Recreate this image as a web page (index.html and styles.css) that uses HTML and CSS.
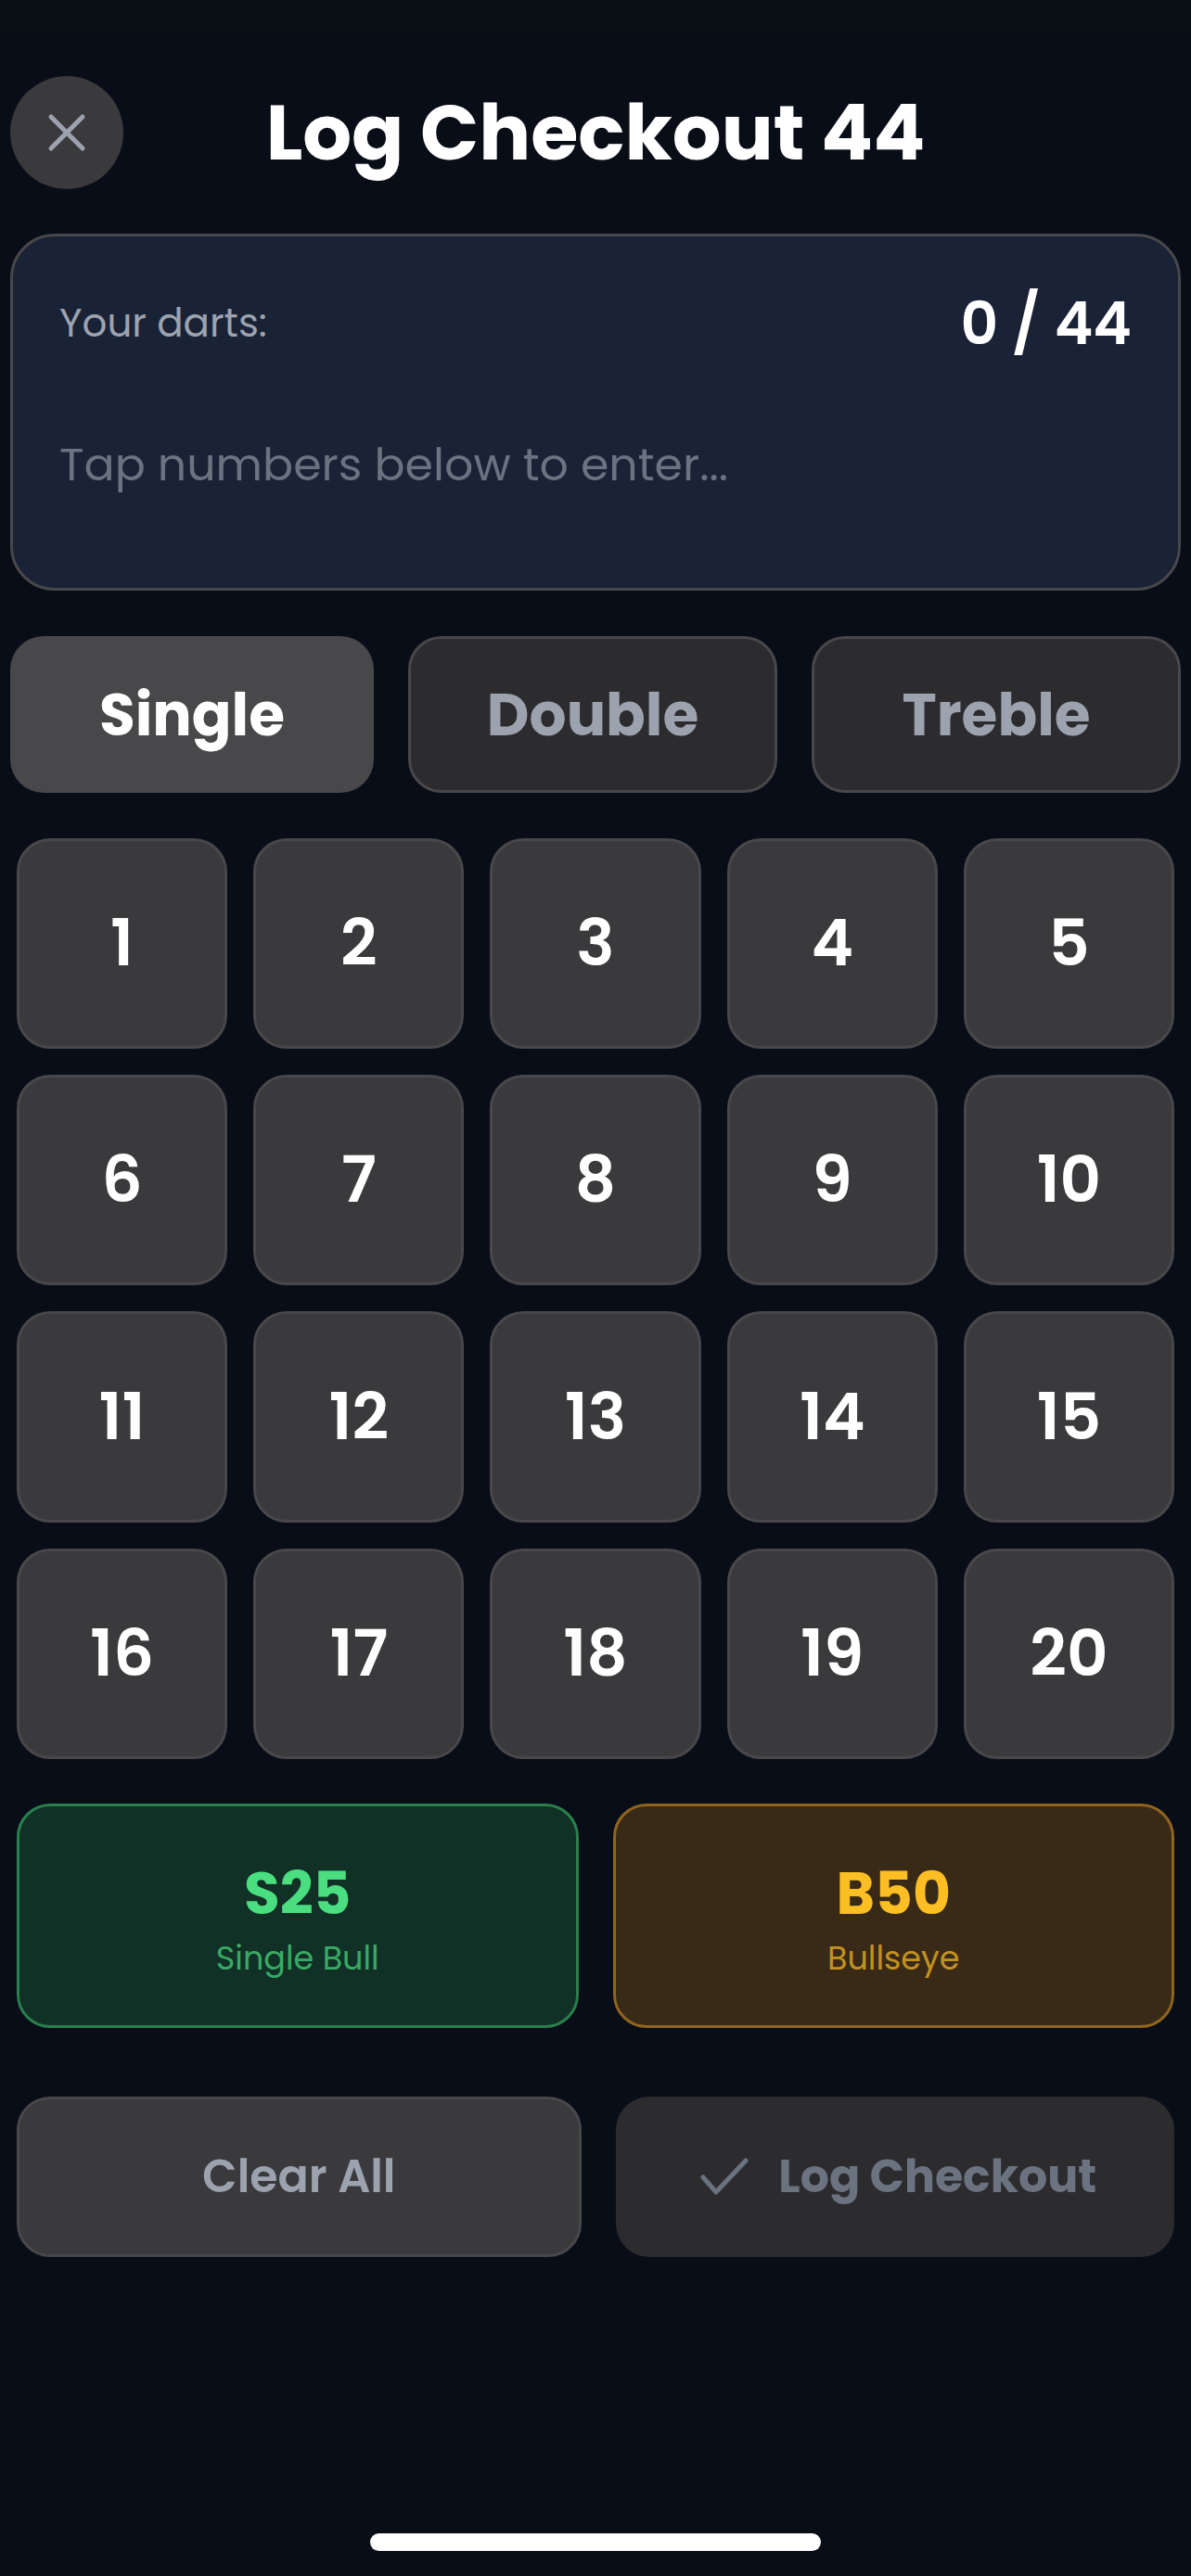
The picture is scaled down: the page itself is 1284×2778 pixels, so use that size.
FILE: index.html
```html
<!DOCTYPE html>
<html lang="en">
<head>
<meta charset="utf-8">
<meta name="viewport" content="width=device-width, initial-scale=1">
<title>Log Checkout 44</title>
<link rel="stylesheet" href="styles.css">
</head>
<body>
<div class="status-strip"></div>
<main class="screen">
  <header class="header">
    <button class="close" type="button" aria-label="Close">
      <svg class="close-icon" viewBox="0 0 42 42" aria-hidden="true"><path d="M4 4L38 38M38 4L4 38"/></svg>
    </button>
    <h1 class="title">Log Checkout 44</h1>
  </header>

  <section class="entry">
    <div class="entry-top">
      <span class="entry-label">Your darts:</span>
      <span class="entry-score">0 / 44</span>
    </div>
    <p class="entry-hint">Tap numbers below to enter...</p>
  </section>

  <div class="modes">
    <button class="mode mode-active" type="button">Single</button>
    <button class="mode" type="button">Double</button>
    <button class="mode" type="button">Treble</button>
  </div>

  <div class="pad">
    <div class="keys">
      <button class="key" type="button">1</button>
      <button class="key" type="button">2</button>
      <button class="key" type="button">3</button>
      <button class="key" type="button">4</button>
      <button class="key" type="button">5</button>
      <button class="key" type="button">6</button>
      <button class="key" type="button">7</button>
      <button class="key" type="button">8</button>
      <button class="key" type="button">9</button>
      <button class="key" type="button">10</button>
      <button class="key" type="button">11</button>
      <button class="key" type="button">12</button>
      <button class="key" type="button">13</button>
      <button class="key" type="button">14</button>
      <button class="key" type="button">15</button>
      <button class="key" type="button">16</button>
      <button class="key" type="button">17</button>
      <button class="key" type="button">18</button>
      <button class="key" type="button">19</button>
      <button class="key" type="button">20</button>
    </div>

    <div class="bulls">
      <button class="bull bull-single" type="button">
        <span class="bull-code">S25</span>
        <span class="bull-name">Single Bull</span>
      </button>
      <button class="bull bull-eye" type="button">
        <span class="bull-code">B50</span>
        <span class="bull-name">Bullseye</span>
      </button>
    </div>

    <div class="actions">
      <button class="action action-clear" type="button">Clear All</button>
      <button class="action action-log" type="button" disabled>
        <svg class="check-icon" viewBox="0 0 60 42" aria-hidden="true"><path d="M11 22L25 38L57 4"/></svg>
        Log Checkout
      </button>
    </div>
  </div>
</main>
<div class="home-indicator"></div>
</body>
</html>
```
FILE: styles.css
```css
*,
*::before,
*::after {
  box-sizing: border-box;
}

body {
  margin: 0;
  min-height: 100vh;
  display: flex;
  flex-direction: column;
  background: #080d18;
  color: #fff;
  font-family: Poppins, Inter, "Liberation Sans", sans-serif;
}

button {
  margin: 0;
  padding: 0;
  border: 0;
  font: inherit;
  color: inherit;
}

.status-strip {
  height: 33px;
  background: #0b1015;
}

.screen {
  flex: 1;
  padding: 48px 11px 0;
}

.header {
  display: grid;
  grid-template-columns: 122px 1fr 122px;
  align-items: center;
}

.close {
  display: flex;
  align-items: center;
  justify-content: center;
  width: 122px;
  height: 122px;
  border-radius: 50%;
  background: #3a3a3c;
}

.close-icon {
  width: 42px;
  height: 42px;
  fill: none;
  stroke: #9ca3af;
  stroke-width: 5;
  stroke-linecap: round;
}

.title {
  margin: 0;
  font-size: 83px;
  line-height: 124px;
  font-weight: 700;
  text-align: center;
}

.entry {
  min-height: 385px;
  margin-top: 47px;
  padding: 48px 50px;
  border: 3px solid #48484a;
  border-radius: 48px;
  background: #1a2236;
}

.entry-top {
  display: flex;
  align-items: center;
  justify-content: space-between;
  line-height: 92px;
}

.entry-label {
  font-size: 42px;
  color: #9ca3af;
}

.entry-score {
  font-size: 63px;
  font-weight: 600;
}

.entry-hint {
  margin: 70px 0 0;
  font-size: 49px;
  line-height: 72px;
  color: #6b7280;
}

.modes {
  display: flex;
  gap: 37px;
  margin-top: 49px;
}

.mode {
  flex: 1;
  height: 169px;
  border: 3px solid #48484a;
  border-radius: 36px;
  background: #2c2c2e;
  font-size: 63px;
  font-weight: 700;
  color: #9ca3af;
}

.mode-active {
  border: 0;
  background: #48484a;
  color: #fff;
}

.pad {
  padding: 0 7px;
}

.keys {
  display: grid;
  grid-template-columns: repeat(5, 1fr);
  gap: 28px;
  margin-top: 49px;
}

.key {
  aspect-ratio: 1;
  border: 3px solid #48484a;
  border-radius: 36px;
  background: #3a3a3c;
  font-size: 69px;
  font-weight: 600;
}

.bulls {
  display: flex;
  gap: 37px;
  margin-top: 48px;
}

.bull {
  flex: 1;
  display: flex;
  flex-direction: column;
  align-items: center;
  justify-content: center;
  height: 242px;
  border: 3px solid;
  border-radius: 36px;
}

.bull-single {
  border-color: #2a7f4c;
  background: #113026;
  color: #4ade80;
}

.bull-eye {
  border-color: #90641f;
  background: #392a18;
  color: #fbbf24;
}

.bull-code {
  font-size: 63px;
  line-height: 92px;
  font-weight: 700;
}

.bull-name {
  font-size: 35px;
  line-height: 48px;
  opacity: 0.7;
}

.actions {
  display: flex;
  gap: 37px;
  margin-top: 74px;
}

.action {
  flex: 1;
  display: flex;
  align-items: center;
  justify-content: center;
  gap: 32px;
  height: 173px;
  border-radius: 36px;
  font-size: 49px;
  white-space: nowrap;
}

.action-clear {
  border: 3px solid #48484a;
  background: #3a3a3c;
  font-weight: 600;
  color: #9ca3af;
}

.action-log {
  background: #2c2c2e;
  font-weight: 700;
  color: #6b7280;
}

.check-icon {
  width: 60px;
  height: 42px;
  fill: none;
  stroke: currentColor;
  stroke-width: 5;
  stroke-linecap: round;
  stroke-linejoin: round;
}

.home-indicator {
  width: 486px;
  height: 19px;
  margin: 0 auto 27px;
  border-radius: 10px;
  background: #fff;
}
```
